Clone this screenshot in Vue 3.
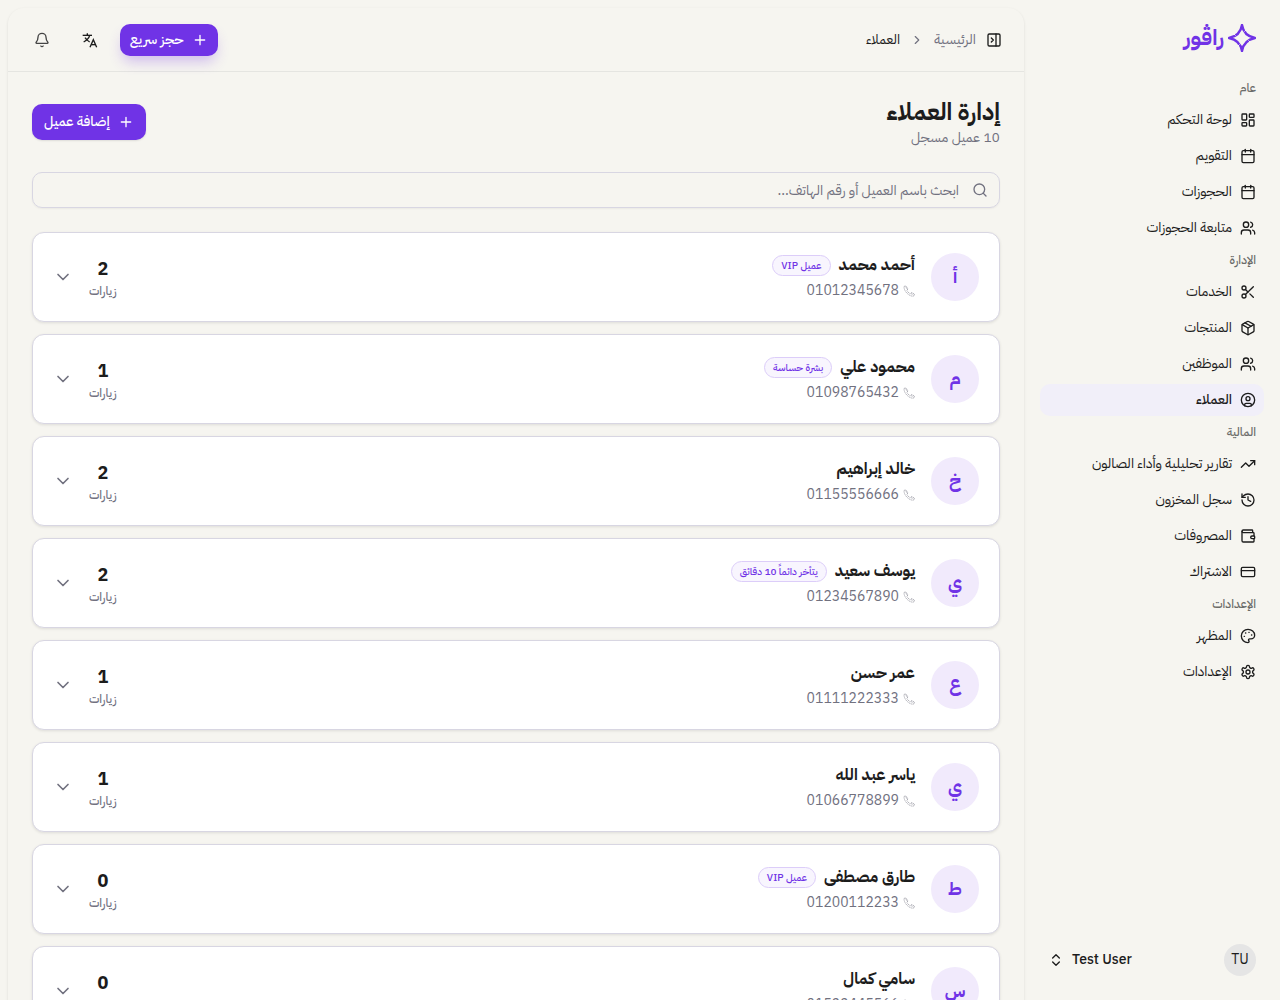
<template>
  <div class="layout" dir="rtl">
    <aside class="sidebar">
      <a href="#" class="logo" aria-label="راڤور">
        <svg class="star" viewBox="0 0 28 28" fill="none" stroke="currentColor" stroke-width="2.4" stroke-linejoin="round">
          <path d="M14 1C15 7.500 19.500 12.500 27 14C19.500 15.500 15 20.500 14 27C13 20.500 8.500 15.500 1 14C8.500 12.500 13 7.500 14 1Z" />
          <path class="cut" d="M16.500 7.500l2-2M11.500 20.500l-2 2M7.500 11.500l-2-2M20.500 16.500l2 2" />
        </svg>
        <span>راڤور</span>
      </a>

      <nav class="nav">
        <section v-for="g in groups" :key="g.title">
          <h2>{{ g.title }}</h2>
          <ul>
            <li v-for="item in g.items" :key="item.label">
              <a href="#" :class="{ active: item.active }">
                <svg class="icon" viewBox="0 0 24 24"><path v-for="d in icons[item.icon]" :key="d" :d="d" /></svg>
                <span>{{ item.label }}</span>
              </a>
            </li>
          </ul>
        </section>
      </nav>

      <button class="user">
        <span class="initials">TU</span>
        <span class="username">Test User</span>
        <svg class="icon" viewBox="0 0 24 24"><path d="m7 15 5 5 5-5" /><path d="m7 9 5-5 5 5" /></svg>
      </button>
    </aside>

    <div class="inset">
      <header class="topbar">
        <button class="ghost small" aria-label="القائمة">
          <svg class="icon" viewBox="0 0 24 24"><path v-for="d in icons.panel" :key="d" :d="d" /></svg>
        </button>
        <nav class="crumbs">
          <a href="#">الرئيسية</a>
          <svg class="icon chev" viewBox="0 0 24 24"><path d="m9 18 6-6-6-6" /></svg>
          <span>العملاء</span>
        </nav>
        <div class="actions">
          <button class="primary quick">
            <svg class="icon" viewBox="0 0 24 24"><path d="M5 12h14M12 5v14" /></svg>
            حجز سريع
          </button>
          <button class="ghost" aria-label="اللغة">
            <svg class="icon translate" viewBox="0 0 24 24"><path v-for="d in icons.translate" :key="d" :d="d" /></svg>
          </button>
          <button class="ghost" aria-label="الإشعارات">
            <svg class="icon bell" viewBox="0 0 24 24"><path v-for="d in icons.bell" :key="d" :d="d" /></svg>
          </button>
        </div>
      </header>

      <main class="content">
        <div class="heading">
          <div>
            <h1>إدارة العملاء</h1>
            <p>10 عميل مسجل</p>
          </div>
          <button class="primary add">
            <svg class="icon" viewBox="0 0 24 24"><path d="M5 12h14M12 5v14" /></svg>
            إضافة عميل
          </button>
        </div>

        <label class="search">
          <svg class="icon" viewBox="0 0 24 24"><path d="m21 21-4.3-4.3" /><path d="M3 11a8 8 0 1 0 16 0a8 8 0 1 0-16 0" /></svg>
          <input v-model="query" type="text" placeholder="ابحث باسم العميل أو رقم الهاتف..." aria-label="بحث" />
        </label>

        <div class="cards">
          <article v-for="c in filtered" :key="c.phone" class="card">
            <div class="avatar">{{ c.name[0] }}</div>
            <div class="info">
              <div class="name">
                <h3>{{ c.name }}</h3>
                <span v-if="c.tag" class="tag">{{ c.tag }}</span>
              </div>
              <div class="phone">
                <svg viewBox="0 0 24 24"><path v-for="d in icons.phone" :key="d" :d="d" /></svg>
                <span dir="ltr">{{ c.phone }}</span>
              </div>
            </div>
            <div class="visits">
              <b>{{ c.visits }}</b>
              <span>زيارات</span>
            </div>
            <button class="toggle" aria-label="تفاصيل">
              <svg class="icon" viewBox="0 0 24 24"><path d="m6 9 6 6 6-6" /></svg>
            </button>
          </article>
        </div>
      </main>
    </div>
  </div>
</template>

<script setup>
import { ref, computed } from 'vue'

const query = ref('')

// 24x24 stroke icons
const icons = {
  dashboard: ['M4 3h5a1 1 0 0 1 1 1v7a1 1 0 0 1-1 1H4a1 1 0 0 1-1-1V4a1 1 0 0 1 1-1z', 'M15 3h5a1 1 0 0 1 1 1v3a1 1 0 0 1-1 1h-5a1 1 0 0 1-1-1V4a1 1 0 0 1 1-1z', 'M15 12h5a1 1 0 0 1 1 1v7a1 1 0 0 1-1 1h-5a1 1 0 0 1-1-1v-7a1 1 0 0 1 1-1z', 'M4 16h5a1 1 0 0 1 1 1v3a1 1 0 0 1-1 1H4a1 1 0 0 1-1-1v-3a1 1 0 0 1 1-1z'],
  calendar: ['M8 2v4', 'M16 2v4', 'M5 4h14a2 2 0 0 1 2 2v14a2 2 0 0 1-2 2H5a2 2 0 0 1-2-2V6a2 2 0 0 1 2-2z', 'M3 10h18'],
  users: ['M16 21v-2a4 4 0 0 0-4-4H6a4 4 0 0 0-4 4v2', 'M5 7a4 4 0 1 0 8 0a4 4 0 1 0-8 0', 'M22 21v-2a4 4 0 0 0-3-3.87', 'M16 3.13a4 4 0 0 1 0 7.75'],
  scissors: ['M3 6a3 3 0 1 0 6 0a3 3 0 1 0-6 0', 'M8.12 8.12 12 12', 'M20 4 8.12 15.88', 'M3 18a3 3 0 1 0 6 0a3 3 0 1 0-6 0', 'M14.8 14.8 20 20'],
  box: ['M11 21.73a2 2 0 0 0 2 0l7-4A2 2 0 0 0 21 16V8a2 2 0 0 0-1-1.73l-7-4a2 2 0 0 0-2 0l-7 4A2 2 0 0 0 3 8v8a2 2 0 0 0 1 1.73z', 'M12 22V12', 'M3.3 7 12 12l8.7-5', 'm7.5 4.27 9 5.15'],
  person: ['M2 12a10 10 0 1 0 20 0a10 10 0 1 0-20 0', 'M9 10a3 3 0 1 0 6 0a3 3 0 1 0-6 0', 'M7 20.66V19a2 2 0 0 1 2-2h6a2 2 0 0 1 2 2v1.66'],
  trend: ['M22 7 13.5 15.5 8.5 10.5 2 17', 'M16 7h6v6'],
  history: ['M3 12a9 9 0 1 0 9-9 9.75 9.75 0 0 0-6.74 2.74L3 8', 'M3 3v5h5', 'M12 7v5l4 2'],
  wallet: ['M19 7V4a1 1 0 0 0-1-1H5a2 2 0 0 0 0 4h15a1 1 0 0 1 1 1v4h-3a2 2 0 0 0 0 4h3a1 1 0 0 0 1-1v-2a1 1 0 0 0-1-1', 'M3 5v14a2 2 0 0 0 2 2h15a1 1 0 0 0 1-1v-4'],
  card: ['M4 5h16a2 2 0 0 1 2 2v10a2 2 0 0 1-2 2H4a2 2 0 0 1-2-2V7a2 2 0 0 1 2-2z', 'M2 10h20'],
  palette: ['M12 2C6.5 2 2 6.5 2 12s4.5 10 10 10c.926 0 1.648-.746 1.648-1.688 0-.437-.18-.835-.437-1.125-.29-.289-.438-.652-.438-1.125a1.64 1.64 0 0 1 1.668-1.668h1.996c3.051 0 5.555-2.503 5.555-5.554C21.965 6.012 17.461 2 12 2z', 'M13.3 6.5h.4', 'M17.3 10.5h.4', 'M8.3 7.5h.4', 'M6.3 12.5h.4'],
  gear: ['M12.22 2h-.44a2 2 0 0 0-2 2v.18a2 2 0 0 1-1 1.73l-.43.25a2 2 0 0 1-2 0l-.15-.08a2 2 0 0 0-2.73.73l-.22.38a2 2 0 0 0 .73 2.73l.15.1a2 2 0 0 1 1 1.72v.51a2 2 0 0 1-1 1.74l-.15.09a2 2 0 0 0-.73 2.73l.22.38a2 2 0 0 0 2.73.73l.15-.08a2 2 0 0 1 2 0l.43.25a2 2 0 0 1 1 1.73V20a2 2 0 0 0 2 2h.44a2 2 0 0 0 2-2v-.18a2 2 0 0 1 1-1.73l.43-.25a2 2 0 0 1 2 0l.15.08a2 2 0 0 0 2.73-.73l.22-.39a2 2 0 0 0-.73-2.73l-.15-.08a2 2 0 0 1-1-1.74v-.5a2 2 0 0 1 1-1.74l.15-.09a2 2 0 0 0 .73-2.73l-.22-.38a2 2 0 0 0-2.73-.73l-.15.08a2 2 0 0 1-2 0l-.43-.25a2 2 0 0 1-1-1.73V4a2 2 0 0 0-2-2z', 'M9 12a3 3 0 1 0 6 0a3 3 0 1 0-6 0'],
  panel: ['M5 3h14a2 2 0 0 1 2 2v14a2 2 0 0 1-2 2H5a2 2 0 0 1-2-2V5a2 2 0 0 1 2-2z', 'M15 3v18', 'm8 9 3 3-3 3'],
  translate: ['M1 5h14', 'M8 2v3', 'M11.5 5C10.5 9 7 12.5 2.5 15', 'M4.5 8.5c2 3 4.500 5 7 6.500', 'M12 23 17 11.500 22 23', 'M14 19h6'],
  bell: ['M10.27 21a2 2 0 0 0 3.46 0', 'M3.26 15.33A1 1 0 0 0 4 17h16a1 1 0 0 0 .74-1.67C19.41 13.96 18 12.5 18 8A6 6 0 0 0 6 8c0 4.5-1.41 5.96-2.74 7.33'],
  phone: ['M2 4c0-2 3-3 4-2l4 6-2.5 2.5c1.5 3 4 5.5 7 7L17 15l6 3c1 2-1 4-3 4.5C11 22 2 12 2 4z', 'M5 3l4 6', 'M16 17l5 3'],
}

const groups = [
  { title: 'عام', items: [
    { label: 'لوحة التحكم', icon: 'dashboard' },
    { label: 'التقويم', icon: 'calendar' },
    { label: 'الحجوزات', icon: 'calendar' },
    { label: 'متابعة الحجوزات', icon: 'users' },
  ] },
  { title: 'الإدارة', items: [
    { label: 'الخدمات', icon: 'scissors' },
    { label: 'المنتجات', icon: 'box' },
    { label: 'الموظفين', icon: 'users' },
    { label: 'العملاء', icon: 'person', active: true },
  ] },
  { title: 'المالية', items: [
    { label: 'تقارير تحليلية وأداء الصالون', icon: 'trend' },
    { label: 'سجل المخزون', icon: 'history' },
    { label: 'المصروفات', icon: 'wallet' },
    { label: 'الاشتراك', icon: 'card' },
  ] },
  { title: 'الإعدادات', items: [
    { label: 'المظهر', icon: 'palette' },
    { label: 'الإعدادات', icon: 'gear' },
  ] },
]

const customers = [
  { name: 'أحمد محمد', tag: 'عميل VIP', phone: '01012345678', visits: 2 },
  { name: 'محمود علي', tag: 'بشرة حساسة', phone: '01098765432', visits: 1 },
  { name: 'خالد إبراهيم', phone: '01155556666', visits: 2 },
  { name: 'يوسف سعيد', tag: 'يتأخر دائماً 10 دقائق', phone: '01234567890', visits: 2 },
  { name: 'عمر حسن', phone: '01111222333', visits: 1 },
  { name: 'ياسر عبد الله', phone: '01066778899', visits: 1 },
  { name: 'طارق مصطفى', tag: 'عميل VIP', phone: '01200112233', visits: 0 },
  { name: 'سامي كمال', phone: '01522445566', visits: 0 },
]

const filtered = computed(() => customers.filter(c => c.name.includes(query.value) || c.phone.includes(query.value)))
</script>

<style>
body { margin: 0; background: #f6f5f0; }
</style>

<style scoped>
* { box-sizing: border-box; }
h1, h2, h3, p, ul { margin: 0; padding: 0; list-style: none; }
a { color: inherit; text-decoration: none; }
button, input { font: inherit; color: inherit; background: none; border: 0; padding: 0; }
button { cursor: pointer; }
.layout { display: flex; min-height: 100vh; font-family: "IBM Plex Sans Arabic", Inter, "Noto Sans Arabic", "DejaVu Sans", sans-serif; font-size: 14px; line-height: 20px; color: #1c1c1c; }
.icon { width: 16px; height: 16px; flex: none; fill: none; stroke: currentColor; stroke-width: 2; stroke-linecap: round; stroke-linejoin: round; }

.sidebar { position: sticky; top: 0; width: 256px; height: 100vh; flex: none; padding: 16px; display: flex; flex-direction: column; }
.logo { display: flex; align-items: center; gap: 4px; height: 28px; margin: 8px 8px 20px; color: #7033e6; font-size: 22px; font-weight: 700; line-height: 28px; }
.star { width: 28px; height: 28px; }
.cut { stroke: #f6f5f0; stroke-width: 1; }
.nav { flex: 1; }
.nav h2 { font-size: 12px; font-weight: 500; line-height: 32px; padding: 0 8px; color: #6b6b69; }
.nav ul { display: flex; flex-direction: column; gap: 4px; }
.nav li a { display: flex; align-items: center; gap: 8px; height: 32px; padding: 0 8px; border-radius: 10px; white-space: nowrap; }
.nav li a.active { background: #f1eff9; font-weight: 500; }
.user { display: flex; align-items: center; gap: 8px; height: 48px; padding: 8px; text-align: left; }
.initials { width: 32px; height: 32px; border-radius: 50%; background: #e5e5e5; line-height: 32px; text-align: center; }
.username { flex: 1; font-weight: 500; }

.inset { flex: 1; min-width: 0; margin: 8px 0 8px 8px; border-radius: 16px; box-shadow: 0 1px 3px #0000001a; }
.topbar { display: flex; align-items: center; height: 64px; padding: 0 16px; border-bottom: 1px solid #e5e5e1; }
.ghost { width: 32px; height: 32px; display: flex; align-items: center; justify-content: center; }
.ghost.small { width: 28px; height: 28px; }
.crumbs { display: flex; align-items: center; gap: 10px; padding-right: 4px; }
.crumbs a, .chev { color: #71717f; }
.chev { width: 14px; height: 14px; }
.actions { display: flex; align-items: center; gap: 16px; margin-right: auto; padding-left: 2px; }
.quick { margin-left: -2px; }
.translate { stroke-width: 2; stroke-linecap: butt; stroke-linejoin: miter; }
.bell { color: #444; }
.primary { display: flex; align-items: center; background: #7033e6; color: #fff; border-radius: 10px; font-weight: 500; }
.quick { height: 32px; padding: 0 10px; gap: 8px; box-shadow: 0 8px 14px -3px #7033e64d; }
.add { height: 36px; padding: 0 12px; gap: 8px; box-shadow: 0 1px 2px #0000001a; }

.content { padding: 24px; display: flex; flex-direction: column; gap: 24px; }
.heading { display: flex; align-items: center; justify-content: space-between; }
h1 { font-size: 24px; font-weight: 700; line-height: 32px; }
.heading p { color: #71717f; }
.search { display: flex; align-items: center; gap: 13px; height: 36px; padding: 0 11px; border: 1px solid #d8d6e2; border-radius: 10px; box-shadow: 0 1px 2px #0000000d; color: #71717f; }
.search input { flex: 1; min-width: 0; height: 34px; padding-top: 1px; outline: none; }
.search input::placeholder { color: #71717f; opacity: 1; }

.cards { display: flex; flex-direction: column; gap: 12px; }
.card { display: flex; align-items: center; gap: 16px; padding: 20px; background: #fff; border: 1px solid #d8d6e2; border-radius: 12px; box-shadow: 0 1px 3px #0000001a; }
.avatar { width: 48px; height: 48px; border-radius: 50%; background: #f1eafc; color: #7033e6; font-size: 18px; font-weight: 700; line-height: 48px; text-align: center; }
.info { flex: 1; display: flex; flex-direction: column; gap: 4px; }
.name { display: flex; align-items: center; gap: 8px; height: 24px; }
h3 { font-size: 16px; font-weight: 700; line-height: 24px; }
.tag { padding: 2px 8px; border: 1px solid #dccdf9; border-radius: 11px; background: #f8f5fe; color: #7033e6; font-size: 10px; font-weight: 500; line-height: 15px; }
.phone { display: flex; align-items: center; gap: 4px; color: #71717f; line-height: 20px; }
.phone svg { width: 12px; height: 12px; fill: none; stroke: currentColor; stroke-width: 1; stroke-dasharray: 3 1; }
.visits { display: flex; flex-direction: column; align-items: center; }
.visits b { font-size: 18px; line-height: 28px; }
.visits span { font-size: 12px; font-weight: 500; line-height: 16px; color: #71717f; }
.toggle { display: flex; color: #71717f; }
.toggle .icon { width: 20px; height: 20px; }
</style>
